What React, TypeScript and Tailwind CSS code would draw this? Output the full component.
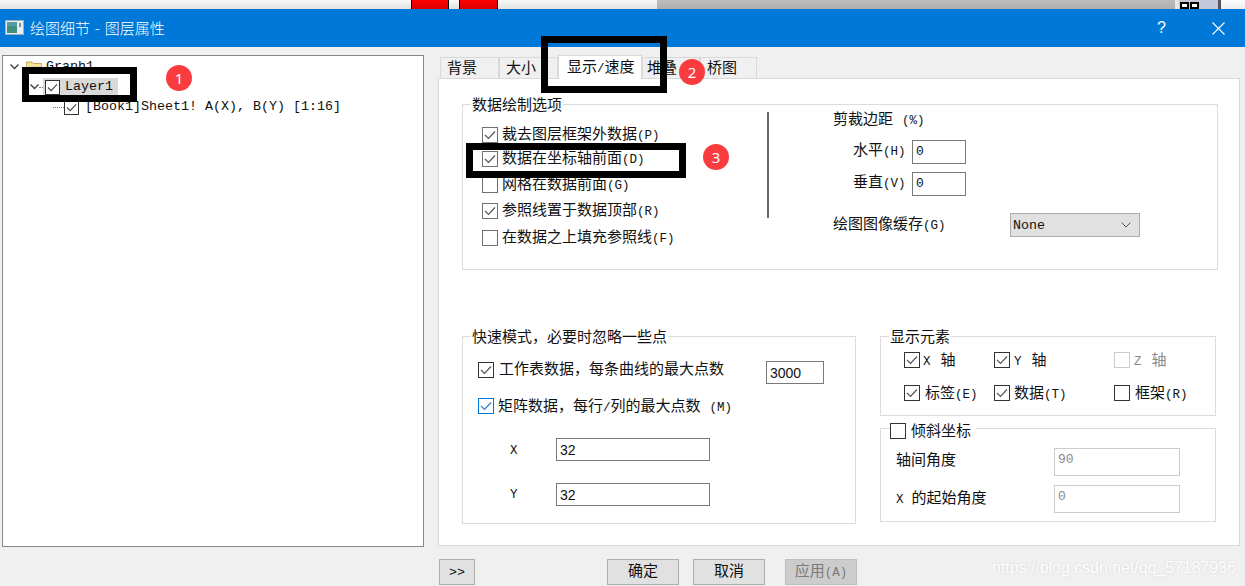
import React from "react";

const L = ({ children }: { children: React.ReactNode }) => (
  <span className="text-[12.5px]">{children}</span>
);

const Check = ({ on = false, blue = false, off = false, soft = false }: { on?: boolean; blue?: boolean; off?: boolean; soft?: boolean }) => (
  <span
    className={
      "flex h-[16px] w-[16px] shrink-0 items-center justify-center border bg-white " +
      (blue ? "border-[#0078d7]" : off ? "border-[#cccccc]" : soft ? "border-[#707070]" : "border-[#333333]")
    }
  >
    {on && (
      <svg width="12" height="10" viewBox="0 0 12 10" fill="none">
        <path d="M1 5 L4.5 8.5 L11 1.5" stroke={blue ? "#2f7fd6" : "#555555"} strokeWidth="1.2" />
      </svg>
    )}
  </span>
);

const Chevron = ({ className }: { className: string }) => (
  <svg className={className} width="9" height="6" viewBox="0 0 9 6" fill="none">
    <path d="M0.5 0.5 L4.5 4.5 L8.5 0.5" stroke="#404040" strokeWidth="1.4" />
  </svg>
);

const Legend = ({ children }: { children: React.ReactNode }) => (
  <div className="-mt-[9px] ml-[8px] h-[18px] w-fit bg-white px-[1px] leading-[18px]">
    <span className="block translate-y-[2px]">{children}</span>
  </div>
);

const Tab = ({ label, w, pl }: { label: React.ReactNode; w: string; pl: string }) => (
  <div className={"flex h-[21px] items-center border border-b-0 border-[#d9d9d9] bg-[#f0f0f0] " + w + " " + pl}>
    <span className="translate-y-[2px]">{label}</span>
  </div>
);

const Row = ({ className, on, soft, children }: { className: string; on?: boolean; soft?: boolean; children: React.ReactNode }) => (
  <div className={"flex h-[16px] items-center " + className}>
    <Check on={on} soft={soft} />
    <span className="ml-[4px] translate-y-[1px] whitespace-nowrap">{children}</span>
  </div>
);

const Btn = ({ children, className }: { children: React.ReactNode; className: string }) => (
  <div className={"flex h-[26px] items-center justify-center border " + className}>
    <span className="translate-y-[1px]">{children}</span>
  </div>
);

const Ring = ({ className }: { className: string }) => (
  <div className={"absolute z-20 border-[7px] border-black " + className} />
);

const Badge = ({ n, className }: { n: string; className: string }) => (
  <div
    className={
      "absolute z-30 flex h-[26px] w-[26px] items-center justify-center rounded-full bg-[#fb3c3e] font-['Noto_Sans',sans-serif] text-[15px] text-white " +
      className
    }
  >
    {n}
  </div>
);

const TreeCheck = () => (
  <span className="flex h-[15px] w-[15px] shrink-0 items-center justify-center border border-[#333333] bg-white">
    <svg width="11" height="9" viewBox="0 0 12 10" fill="none">
      <path d="M1 5 L4.5 8.5 L11 1.5" stroke="#444444" strokeWidth="1.2" />
    </svg>
  </span>
);

export default function App() {
  return (
    <div className="relative h-[586px] w-[1245px] overflow-hidden bg-[#f0f0f0] font-['Liberation_Mono','Noto_Sans_CJK_SC',monospace] text-[15px] leading-[16px] text-[#111111]">
      {/* strip behind the dialog */}
      <div className="flex h-[9px]">
        <div className="w-[411px] bg-gradient-to-b from-[#f8f8f8] to-[#e2e2e2]" />
        <div className="w-[38px] border-x border-black bg-gradient-to-b from-[#ff0000] to-[#d80000]" />
        <div className="w-[10px] bg-gradient-to-b from-[#f8f8f8] to-[#e2e2e2]" />
        <div className="w-[39px] border-x border-black bg-gradient-to-b from-[#ff0000] to-[#d80000]" />
        <div className="w-[159px] bg-gradient-to-b from-[#f8f8f8] to-[#e2e2e2]" />
        <div className="w-[518px] bg-gradient-to-b from-[#bdbdbd] to-[#aeaeae]" />
        <div className="flex w-[43px] gap-[1px] border-l-[4px] border-[#e6e6e6] bg-[#c4c8d8] pl-[1px] pt-[2px]">
          <span className="flex h-[7px] w-[9px] border-2 border-black bg-white" />
          <span className="flex h-[7px] w-[9px] border-2 border-black bg-white" />
        </div>
        <div className="w-[3px] bg-[#555555]" />
        <div className="flex-1 bg-gradient-to-b from-[#ffffff] to-[#ececec]" />
      </div>

      {/* title bar */}
      <div className="flex h-[38px] items-center bg-[#0078d7] pl-[5px] font-['Noto_Sans_CJK_SC',sans-serif] text-white">
        <svg width="19" height="15" viewBox="0 0 19 15" className="mt-[-1px]">
          <rect x="0.5" y="0.5" width="18" height="14" fill="#e8eef0" stroke="#9fb0b8" />
          <rect x="2" y="2" width="10" height="11" fill="#3f8f7f" />
          <rect x="2" y="2" width="10" height="4" fill="#5a9aa8" />
          <rect x="14" y="3" width="2" height="4" fill="#7f8f98" />
        </svg>
        <span className="ml-[6px] whitespace-nowrap text-[15px] font-light [word-spacing:1.5px]">绘图细节 - 图层属性</span>
        <span className="ml-auto font-['Liberation_Sans',sans-serif] text-[16px]">?</span>
        <svg className="ml-[46px] mr-[20px]" width="13" height="13" viewBox="0 0 13 13" fill="none">
          <path d="M0.5 0.5 L12.5 12.5 M12.5 0.5 L0.5 12.5" stroke="#ffffff" strokeWidth="1.1" />
        </svg>
      </div>

      {/* body */}
      <div className="flex">
        {/* tree */}
        <div className="ml-[2px] mt-[8px] h-[492px] w-[422px] border border-[#828790] bg-white text-[13.33px]">
          <div className="mt-[1px] flex h-[19px] items-center pl-[7px]">
            <Chevron className="" />
            <svg className="ml-[7px]" width="17" height="13" viewBox="0 0 17 13">
              <path d="M0.5 2 H6 L7.5 3.5 H15.5 V12.5 H0.5 Z" fill="#f3d98b" stroke="#c9a85a" />
              <path d="M0.5 5 H15.5" stroke="#fbeebc" />
            </svg>
            <span className="ml-[3px]">Graph1</span>
          </div>
          <div className="mt-[1px] flex h-[20px] items-center pl-[27px]">
            <Chevron className="" />
            <span className="w-[4px] border-t border-dotted border-[#777777]" />
            <div className="flex h-[18px] w-[75px] items-center bg-[#d9d9d9] pl-[2px]">
              <TreeCheck />
              <span className="ml-[5px]">Layer1</span>
            </div>
          </div>
          <div className="flex h-[20px] items-center pl-[50px]">
            <span className="w-[11px] border-t border-dotted border-[#777777]" />
            <TreeCheck />
            <span className="ml-[6px] whitespace-pre">[Book1]Sheet1! A(X), B(Y) [1:16]</span>
          </div>
        </div>

        {/* right side */}
        <div className="ml-[14px] w-[802px]">
          <div className="relative z-10 flex h-[31px] items-end pl-[2px]">
            <Tab label="背景" w="w-[59px]" pl="pl-[6px]" />
            <Tab label="大小" w="w-[59px]" pl="pl-[6px]" />
            <div className="-mb-[1px] flex h-[24px] w-[84px] items-center border border-b-0 border-[#d9d9d9] bg-white pl-[8px]">
              <span className="translate-y-[1px]">显示<L>/</L>速度</span>
            </div>
            <Tab label="堆叠" w="w-[58px]" pl="pl-[4px]" />
            <Tab label="桥图" w="w-[57px]" pl="pl-[6px]" />
          </div>

          <div className="h-[468px] border border-[#d9d9d9] bg-white pl-[23px] pt-[25px]">
            {/* data drawing options */}
            <div className="h-[166px] w-[756px] border border-[#dcdcdc]">
              <Legend>数据绘制选项</Legend>
              <div className="flex">
                <div className="w-[304px] pl-[19px]">
                  <Row className="mt-[13px]" on soft>裁去图层框架外数据<L>(P)</L></Row>
                  <Row className="mt-[8px]" on soft>数据在坐标轴前面<L>(D)</L></Row>
                  <Row className="mt-[10px]" soft>网格在数据前面<L>(G)</L></Row>
                  <Row className="mt-[10px]" on soft>参照线置于数据顶部<L>(R)</L></Row>
                  <Row className="mt-[11px]" soft>在数据之上填充参照线<L>(F)</L></Row>
                </div>
                <div className="-mt-[2px] h-[106px] w-[2px] bg-[#696969]" />
                <div className="ml-[64px]">
                  <div className="-mt-[3px] h-[16px] translate-y-[2px] whitespace-pre">剪裁边距 <L>(%)</L></div>
                  <div className="mt-[13px] flex items-center pl-[20px]">
                    <span className="w-[59px] whitespace-nowrap">水平<L>(H)</L></span>
                    <div className="flex h-[24px] w-[54px] items-center border border-[#7a7a7a] pl-[3px] text-[13px]">0</div>
                  </div>
                  <div className="mt-[8px] flex items-center pl-[20px]">
                    <span className="w-[59px] whitespace-nowrap">垂直<L>(V)</L></span>
                    <div className="flex h-[24px] w-[54px] items-center border border-[#7a7a7a] pl-[3px] text-[13px]">0</div>
                  </div>
                  <div className="mt-[17px] flex items-center">
                    <span className="w-[177px] translate-y-[1px] whitespace-nowrap">绘图图像缓存<L>(G)</L></span>
                    <div className="flex h-[24px] w-[130px] items-center border border-[#adadad] bg-[#e1e1e1] pl-[2px] pr-[8px] text-[13.33px]">
                      <span className="translate-y-[1px]">None</span>
                      <svg className="ml-auto" width="10" height="6" viewBox="0 0 10 6" fill="none">
                        <path d="M0.5 0.5 L5 5 L9.5 0.5" stroke="#555555" />
                      </svg>
                    </div>
                  </div>
                </div>
              </div>
            </div>

            <div className="mt-[66px] flex">
              {/* fast mode */}
              <div className="h-[188px] w-[394px] border border-[#dcdcdc]">
                <Legend>快速模式，必要时忽略一些点</Legend>
                <div className="mt-[15px] flex h-[23px] items-start pl-[15px]">
                  <span className="mt-[1px]"><Check on /></span>
                  <span className="ml-[5px] translate-y-[2px] whitespace-nowrap">工作表数据，每条曲线的最大点数</span>
                  <div className="ml-auto mr-[31px] flex h-[23px] w-[58px] items-center border border-[#7a7a7a] pl-[3px] font-['Liberation_Sans',sans-serif] text-[14px]">3000</div>
                </div>
                <div className="mt-[14px] flex h-[16px] items-center pl-[15px]">
                  <Check on blue />
                  <span className="ml-[4px] translate-y-[2px] whitespace-pre">矩阵数据，每行<L>/</L>列的最大点数 <L>(M)</L></span>
                </div>
                <div className="mt-[24px] flex items-center pl-[47px]">
                  <span className="w-[46px] translate-y-[1px] text-[12.5px]">X</span>
                  <div className="flex h-[23px] w-[154px] items-center border border-[#7a7a7a] pl-[3px] font-['Liberation_Sans',sans-serif] text-[14px]">32</div>
                </div>
                <div className="mt-[22px] flex items-center pl-[47px]">
                  <span className="w-[46px] text-[12.5px]">Y</span>
                  <div className="flex h-[23px] w-[154px] items-center border border-[#7a7a7a] pl-[3px] font-['Liberation_Sans',sans-serif] text-[14px]">32</div>
                </div>
              </div>

              <div className="ml-[24px] w-[336px]">
                {/* display elements */}
                <div className="h-[80px] border border-[#dcdcdc]">
                  <Legend>显示元素</Legend>
                  <div className="mt-[6px] grid grid-cols-[90px_120px_100px] gap-y-[17px] pl-[23px]">
                    <div className="flex h-[16px] items-center"><Check on /><span className="ml-[3px] translate-y-[2px] whitespace-nowrap"><L>X</L><span className="ml-[10px]">轴</span></span></div>
                    <div className="flex h-[16px] items-center"><Check on /><span className="ml-[4px] translate-y-[2px] whitespace-nowrap"><L>Y</L><span className="ml-[10px]">轴</span></span></div>
                    <div className="flex h-[16px] items-center"><Check off /><span className="ml-[4px] translate-y-[2px] whitespace-nowrap text-[#8a8a8a]"><L>Z</L><span className="ml-[10px]">轴</span></span></div>
                    <div className="flex h-[16px] items-center"><Check on /><span className="ml-[5px] translate-y-[2px] whitespace-nowrap">标签<L>(E)</L></span></div>
                    <div className="flex h-[16px] items-center"><Check on /><span className="ml-[4px] translate-y-[2px] whitespace-nowrap">数据<L>(T)</L></span></div>
                    <div className="flex h-[16px] items-center"><Check /><span className="ml-[5px] translate-y-[2px] whitespace-nowrap">框架<L>(R)</L></span></div>
                  </div>
                </div>
                {/* oblique axes */}
                <div className="mt-[12px] h-[94px] border border-[#dcdcdc]">
                  <div className="-mt-[6px] ml-[9px] flex h-[16px] w-fit items-center bg-white pr-[5px]">
                    <Check />
                    <span className="ml-[5px] translate-y-[2px]">倾斜坐标</span>
                  </div>
                  <div className="mt-[9px] flex items-center pl-[15px]">
                    <span className="w-[158px]">轴间角度</span>
                    <div className="h-[28px] w-[126px] border border-[#cccccc] pl-[3px] pt-[3px] text-[13px] text-[#8a8a8a]">90</div>
                  </div>
                  <div className="mt-[9px] flex items-center pl-[15px]">
                    <span className="w-[158px] translate-y-[1px] whitespace-pre"><L>X</L><span className="ml-[8px]">的起始角度</span></span>
                    <div className="h-[28px] w-[126px] border border-[#cccccc] pl-[3px] pt-[3px] text-[13px] text-[#8a8a8a]">0</div>
                  </div>
                </div>
              </div>
            </div>
          </div>

          {/* buttons */}
          <div className="mt-[13px] flex pl-[1px]">
            <Btn className="w-[36px] border-[#adadad] bg-[#e1e1e1] text-[13.33px]">&gt;&gt;</Btn>
            <Btn className="ml-[132px] w-[72px] border-[#adadad] bg-[#e1e1e1]">确定</Btn>
            <Btn className="ml-[14px] w-[72px] border-[#adadad] bg-[#e1e1e1]">取消</Btn>
            <Btn className="ml-[20px] w-[72px] border-[#bfbfbf] bg-[#cccccc] text-[#7a7a7a]">应用<L>(A)</L></Btn>
          </div>
        </div>
      </div>

      {/* annotations drawn over the screenshot */}
      <Ring className="left-[22px] top-[67px] h-[35px] w-[115px]" />
      <Ring className="left-[541px] top-[36px] h-[57px] w-[126px]" />
      <Ring className="left-[466px] top-[143px] h-[35px] w-[220px]" />
      <Badge n="1" className="left-[166px] top-[65px]" />
      <Badge n="2" className="left-[679px] top-[59px]" />
      <Badge n="3" className="left-[703px] top-[144px]" />
      <div className="absolute left-[992px] top-[558px] z-30 whitespace-nowrap font-['Liberation_Sans',sans-serif] text-[15.9px] leading-[20px] text-white [text-shadow:0_0_2px_#cfcfcf]">
        https://blog.csdn.net/qq_57187936
      </div>
    </div>
  );
}
